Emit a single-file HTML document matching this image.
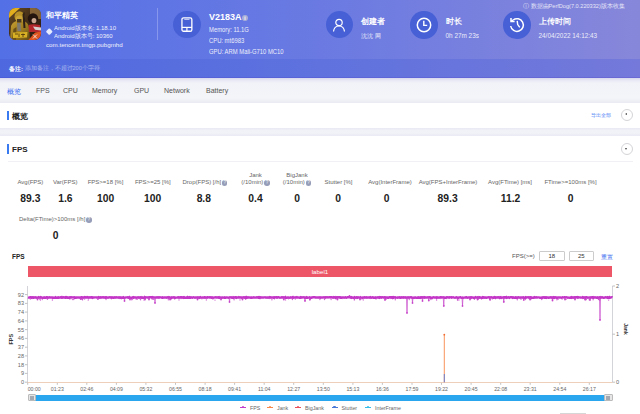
<!DOCTYPE html>
<html><head><meta charset="utf-8">
<style>
*{margin:0;padding:0;box-sizing:border-box}
html,body{width:640px;height:414px;overflow:hidden;background:#f2f3f8;font-family:"Liberation Sans",sans-serif;color:#333}
.a{position:absolute;white-space:nowrap}
.hs{transform:scaleX(.85);transform-origin:0 0}
#hdr{position:absolute;left:0;top:0;width:640px;height:59px;background:linear-gradient(90deg,#5470e6 0%,#6a7ae2 50%,#8787da 100%)}
#band{position:absolute;left:0;top:58.7px;width:640px;height:19.6px;box-shadow:inset 0 -1px 0 rgba(70,40,190,.18);background:linear-gradient(90deg,#4e69e0 0%,#5f72de 50%,#7479da 100%)}
.w{color:#fff}
.circ{position:absolute;width:27.4px;height:27.4px;border-radius:50%;background:#4760d6}
#tabs{position:absolute;left:0;top:78.3px;width:640px;height:24.5px;background:linear-gradient(#d8d8ee 0,#e8e9f5 2.5px,#f2f3f8 5px,#f4f5f9 20px,#ebecf3 24.5px)}
.tab{position:absolute;top:87.2px;font-size:7px;color:#555}
.card{position:absolute;left:0;width:640px;background:#fff}
.bar{position:absolute;width:2px;background:#3a7af0}
.ttl{position:absolute;font-size:8.5px;font-weight:bold;color:#222}
.lbl{position:absolute;font-size:6px;color:#666;text-align:center;line-height:7px}
.val{position:absolute;font-size:10.3px;font-weight:bold;color:#222;text-align:center}
.yl{position:absolute;font-size:5.5px;color:#555;text-align:right;width:14px}
.xl{position:absolute;font-size:5.5px;color:#555;text-align:center;width:20px;top:386px}
.q{display:inline-block;width:5.5px;height:5.5px;border-radius:50%;background:#959db8;color:#fff;font-size:4.5px;line-height:5.5px;text-align:center;margin-left:0.8px;vertical-align:0px}
.inp{border:0.7px solid #ccc;border-radius:1px;font-size:6px;color:#333;text-align:center;line-height:9px}
.lg{font-size:5.3px;color:#666}
.lg i{display:inline-block;width:6px;height:1.2px;margin-right:4px;vertical-align:1.6px;position:relative}
.lg i:after{content:"";position:absolute;left:1.8px;top:-0.9px;width:2.4px;height:2.4px;border-radius:50%;background:inherit}
</style></head><body>
<div id="hdr"></div>
<div id="band"></div>
<div id="tabs"></div>
<!-- app icon -->
<svg class="a" style="left:9.4px;top:8.4px" width="32" height="32" viewBox="0 0 32 32">
<defs><clipPath id="ic"><rect x="0" y="0" width="32" height="32" rx="6.5"/></clipPath>
<linearGradient id="bg1" x1="0" y1="0" x2="1" y2="1"><stop offset="0" stop-color="#6a4c22"/><stop offset=".5" stop-color="#3e2a16"/><stop offset="1" stop-color="#24160e"/></linearGradient>
<linearGradient id="sol" x1="0" y1="0" x2="1" y2="1"><stop offset="0" stop-color="#c9a030"/><stop offset=".6" stop-color="#94741e"/><stop offset="1" stop-color="#5e4614"/></linearGradient></defs>
<g clip-path="url(#ic)">
<rect width="32" height="32" fill="url(#bg1)"/>
<rect x="21" y="0" width="11" height="11" fill="#9a7440" opacity=".75"/>
<path d="M1 32 L2 18 Q4 13 9 13 L14 13 Q19 14 20 19 L21 32 Z" fill="url(#sol)"/>
<path d="M3 32 L4.5 21 L7.5 19 L7 32Z" fill="#6a5018"/>
<ellipse cx="10.5" cy="8.5" rx="5" ry="5.3" fill="#b89228"/>
<path d="M6.5 9.5 Q10.5 5.5 14.5 9.5 L13.5 13.5 L7.5 13.5Z" fill="#caa436"/>
<rect x="8" y="11" width="4.5" height="3.5" fill="#4a3820"/>
<path d="M8 15 L11.5 15 L12 23 L8.5 23Z" fill="#7e7a72"/>
<path d="M0 0 L11 0 L0 10Z" fill="#e2ae1e"/>
<path d="M13.5 6 L15.5 4 L16.5 20 L14.5 20Z" fill="#2e2016"/>
<ellipse cx="24" cy="10.5" rx="5.2" ry="5.2" fill="#24160f"/>
<ellipse cx="25" cy="12.6" rx="2.4" ry="2.7" fill="#c8a690"/>
<path d="M19.5 17 Q24 15.5 31 17 L32 24 L20 24Z" fill="#b0262a"/>
<path d="M24 18.5 L32 19.5 L32 22.5 L26 21.8Z" fill="#d6d0ce"/>
<path d="M4 24.5 L18.5 24 L18 29.5 L4 30Z" fill="#d8b024"/>
<path d="M6 26 H9 M10 25.5 V29 M12 26.5 H16 M14 25.5 V29" stroke="#4a300c" stroke-width=".8"/>
<path d="M19.4 32 L32 32 L32 23.5 L26 24.5Z" fill="#e05420"/>
<path d="M24 26.5 L28 30.5 M28 26.5 L24 30.5" stroke="#f4e8e0" stroke-width=".9"/>
</g></svg>
<div class="a w" style="left:46px;top:10px;font-size:8px;font-weight:bold">和平精英</div>
<div class="a" style="left:47.2px;top:28.7px;width:4.6px;height:4.6px;background:#e6ebff;transform:rotate(45deg);border-radius:1px"></div>
<div class="a w" style="left:54px;top:23.5px;font-size:6px;opacity:.9">Android版本名: 1.18.10</div>
<div class="a w" style="left:54px;top:31.5px;font-size:6px;opacity:.9">Android版本号: 10360</div>
<div class="a w" style="left:46px;top:41px;font-size:6.2px;opacity:.9">com.tencent.tmgp.pubgmhd</div>
<div class="a" style="left:157px;top:8px;width:1px;height:32px;background:rgba(255,255,255,.25)"></div>

<!-- device -->
<div class="circ" style="left:173.2px;top:11px"></div>
<svg class="a" style="left:180px;top:17px" width="15" height="17" viewBox="0 0 15 17"><rect x="1.95" y="0.85" width="9.9" height="13.4" rx="1.6" fill="none" stroke="#fff" stroke-width="1.3"/><line x1="4.3" y1="2.4" x2="9.5" y2="2.4" stroke="#fff" stroke-width="1" opacity=".7"/><line x1="1.95" y1="10.4" x2="11.85" y2="10.4" stroke="#fff" stroke-width="1.2"/><line x1="6.9" y1="10.4" x2="6.9" y2="14.2" stroke="#fff" stroke-width="1.2"/></svg>
<div class="a w" style="left:209px;top:11.5px;font-size:9px;font-weight:bold">V2183A</div>
<div class="a" style="left:242px;top:14.5px;width:6px;height:6px;border-radius:50%;background:#aab0d8;color:#fff;font-size:5px;line-height:6px;text-align:center;font-weight:bold">i</div>
<div class="a w hs" style="left:209px;top:26.3px;font-size:6.9px;opacity:.88">Memory: 11.1G</div>
<div class="a w hs" style="left:209px;top:37.1px;font-size:6.9px;opacity:.88">CPU: mt6983</div>
<div class="a w hs" style="left:209px;top:47.9px;font-size:6.9px;opacity:.88">GPU: ARM Mali-G710 MC10</div>

<!-- creator -->
<div class="circ" style="left:325.5px;top:11px"></div>
<svg class="a" style="left:331px;top:17px" width="16" height="16" viewBox="0 0 16 16"><circle cx="8" cy="5.5" r="3.2" fill="none" stroke="#fff" stroke-width="1.2"/><path d="M2.5 14.5 C3 10.5 5.5 9 8 9 C10.5 9 13 10.5 13.5 14.5" fill="none" stroke="#fff" stroke-width="1.2"/></svg>
<div class="a w" style="left:361px;top:16.2px;font-size:7.8px;font-weight:bold">创建者</div>
<div class="a w" style="left:361px;top:32px;font-size:6.4px;opacity:.85">沈沈 网</div>

<!-- duration -->
<div class="circ" style="left:410.2px;top:11.2px"></div>
<svg class="a" style="left:415.7px;top:16.7px" width="16" height="16" viewBox="0 0 16 16"><circle cx="8" cy="8" r="6.7" fill="none" stroke="#fff" stroke-width="1.5"/><path d="M7.8 3.8 V8.4 H11.2" fill="none" stroke="#fff" stroke-width="1.4"/></svg>
<div class="a w" style="left:445.5px;top:16.5px;font-size:7.6px;font-weight:bold">时长</div>
<div class="a w" style="left:445.5px;top:32px;font-size:6.4px;opacity:.85">0h 27m 23s</div>

<!-- upload -->
<div class="circ" style="left:503.3px;top:11.3px"></div>
<svg class="a" style="left:508.7px;top:17px" width="16" height="16" viewBox="0 0 16 16"><path d="M1.7 9 A6.35 6.35 0 1 0 4.1 3" fill="none" stroke="#fff" stroke-width="1.5"/><path d="M4.1 3 L2 4.4" fill="none" stroke="#fff" stroke-width="1.4"/><path d="M2 0.9 V4.4 H5.6" fill="none" stroke="#fff" stroke-width="1.5"/><path d="M8.2 3.9 L8.7 7.6 L10.8 10.4" fill="none" stroke="#fff" stroke-width="1.4"/></svg>
<div class="a w" style="left:538.5px;top:16.5px;font-size:7.6px;font-weight:bold">上传时间</div>
<div class="a w" style="left:538.5px;top:32px;font-size:6.4px;opacity:.85">24/04/2022 14:12:43</div>

<div class="a w" style="left:523px;top:3px;font-size:5.6px;opacity:.8">ⓘ 数据由PerfDog(7.0.220332)版本收集</div>

<!-- remarks -->
<div class="a w" style="left:9px;top:65.3px;font-size:5.8px;font-weight:bold">备注:</div>
<div class="a" style="left:24.5px;top:65.4px;font-size:5.6px;color:rgba(255,255,255,.5)">添加备注，不超过200个字符</div>

<!-- tabs -->
<div class="tab" style="left:7px;color:#3a6cf0">概览</div>
<div class="tab" style="left:36px">FPS</div>
<div class="tab" style="left:63px">CPU</div>
<div class="tab" style="left:92px">Memory</div>
<div class="tab" style="left:134px">GPU</div>
<div class="tab" style="left:164px">Network</div>
<div class="tab" style="left:206px">Battery</div>

<!-- overview card -->
<div class="card" style="top:102.5px;height:25.5px"></div>
<div class="bar" style="left:7px;top:110.5px;height:9px"></div>
<div class="ttl" style="left:12px;top:111px;font-size:7.8px">概览</div>
<div class="a" style="left:590.5px;top:112.2px;font-size:5.45px;color:#4a80f5">导出全部</div>
<div class="a" style="left:621px;top:109px;width:12px;height:12px;border-radius:50%;border:0.8px solid #d4d4d8"></div>
<div class="a" style="left:625.3px;top:113.2px;width:0;height:0;border-top:1.8px solid transparent;border-bottom:1.8px solid transparent;border-right:2.7px solid #444"></div>

<div class="a" style="left:0;top:128px;width:640px;height:8px;background:linear-gradient(#e8e9f3 0,#f1f2f8 2.5px,#f2f3f8 5px,#e9eaf3 8px)"></div>
<!-- FPS card -->
<div class="card" style="top:136px;height:278px"></div>
<div class="bar" style="left:7px;top:144px;height:9.5px"></div>
<div class="ttl" style="left:12px;top:144.5px;font-size:8px">FPS</div>
<div class="a" style="left:621px;top:143px;width:12px;height:12px;border-radius:50%;border:0.8px solid #d4d4d8"></div>
<div class="a" style="left:625px;top:148px;width:0;height:0;border-left:1.8px solid transparent;border-right:1.8px solid transparent;border-top:2.7px solid #444"></div>
<div class="a" style="left:8px;top:161.2px;width:625px;height:1px;background:#f0f0f5"></div>


<!-- stats -->
<div class="lbl" style="left:-19.6px;top:179.2px;width:100px">Avg(FPS)</div>
<div class="lbl" style="left:15.2px;top:179.2px;width:100px">Var(FPS)</div>
<div class="lbl" style="left:55.5px;top:179.2px;width:100px">FPS&gt;=18 [%]</div>
<div class="lbl" style="left:102.8px;top:179.2px;width:100px">FPS&gt;=25 [%]</div>
<div class="lbl" style="left:155.0px;top:179.2px;width:100px">Drop(FPS) [/h]<span class="q">?</span></div>
<div class="lbl" style="left:205.5px;top:172px;width:100px">Jank<br>(/10min)<span class="q">?</span></div>
<div class="lbl" style="left:247.0px;top:172px;width:100px">BigJank<br>(/10min)<span class="q">?</span></div>
<div class="lbl" style="left:288.5px;top:179.2px;width:100px">Stutter [%]</div>
<div class="lbl" style="left:340.0px;top:179.2px;width:100px">Avg(InterFrame)</div>
<div class="lbl" style="left:398.0px;top:179.2px;width:100px">Avg(FPS+InterFrame)</div>
<div class="lbl" style="left:460.0px;top:179.2px;width:100px">Avg(FTime) [ms]</div>
<div class="lbl" style="left:520.5px;top:179.2px;width:100px">FTime&gt;=100ms [%]</div>
<div class="val" style="left:0.4px;top:192.5px;width:60px">89.3</div>
<div class="val" style="left:35.4px;top:192.5px;width:60px">1.6</div>
<div class="val" style="left:75.7px;top:192.5px;width:60px">100</div>
<div class="val" style="left:122.6px;top:192.5px;width:60px">100</div>
<div class="val" style="left:173.8px;top:192.5px;width:60px">8.8</div>
<div class="val" style="left:225.5px;top:192.5px;width:60px">0.4</div>
<div class="val" style="left:267.0px;top:192.5px;width:60px">0</div>
<div class="val" style="left:308.0px;top:192.5px;width:60px">0</div>
<div class="val" style="left:356.5px;top:192.5px;width:60px">0</div>
<div class="val" style="left:417.6px;top:192.5px;width:60px">89.3</div>
<div class="val" style="left:480.5px;top:192.5px;width:60px">11.2</div>
<div class="val" style="left:540.5px;top:192.5px;width:60px">0</div>
<div class="lbl" style="left:19px;top:216px;text-align:left">Delta(FTime)&gt;100ms [/h]<span class="q">?</span></div>
<div class="val" style="left:25.7px;top:229.5px;width:60px">0</div>

<!-- chart header -->
<div class="a" style="left:12px;top:253px;font-size:6.5px;font-weight:bold;color:#222">FPS</div>
<div class="a" style="left:512px;top:252.5px;font-size:6px;color:#555">FPS(&gt;=)</div>
<div class="a inp" style="left:538.5px;top:251px;width:26.5px;height:10px">18</div>
<div class="a inp" style="left:568.5px;top:251px;width:25.5px;height:10px">25</div>
<div class="a" style="left:601px;top:252.5px;font-size:5.8px;color:#3a6cf0">重置</div>
<div class="a" style="left:27.8px;top:266.3px;width:584.7px;height:10.6px;background:#ec5666"></div>
<div class="a" style="left:300px;top:267.8px;width:40px;text-align:center;font-size:6.2px;color:#fff">label1</div>

<!-- scrollbar -->
<div class="a" style="left:30px;top:394.6px;width:580px;height:6px;background:#2aa6ee"></div>
<div class="a" style="left:27.6px;top:394.2px;width:8.5px;height:7.3px;background:#e6e6e6;border:0.7px solid #bbb;border-radius:1px"></div>
<div class="a" style="left:29.8px;top:396px;width:4.2px;height:3.6px;background:#a4a8b0"></div>
<div class="a" style="left:604px;top:394.2px;width:8.5px;height:7.3px;background:#e6e6e6;border:0.7px solid #bbb;border-radius:1px"></div>
<div class="a" style="left:606.2px;top:396px;width:4.2px;height:3.6px;background:#a4a8b0"></div>
<div class="a" style="left:560px;top:413px;width:26px;height:1px;background:#d6d6d6"></div>

<!-- legend -->
<div class="a lg" style="left:240px;top:404.5px"><i style="background:#c23fcb"></i>FPS</div>
<div class="a lg" style="left:267px;top:404.5px"><i style="background:#f7884a"></i>Jank</div>
<div class="a lg" style="left:295px;top:404.5px"><i style="background:#e8505a"></i>BigJank</div>
<div class="a lg" style="left:331.5px;top:404.5px"><i style="background:#4a7ad8"></i>Stutter</div>
<div class="a lg" style="left:365px;top:404.5px"><i style="background:#38bce8"></i>InterFrame</div>
<!--CHART--><svg class="a" style="left:0;top:0" width="640" height="414" viewBox="0 0 640 414" font-family="Liberation Sans, sans-serif">
<g font-size="5.6" fill="#666"><text x="24" y="384.2" text-anchor="end">0</text><line x1="25" y1="382.2" x2="28" y2="382.2" stroke="#999" stroke-width="0.6"/><text x="24" y="375.4" text-anchor="end">9</text><line x1="25" y1="373.4" x2="28" y2="373.4" stroke="#999" stroke-width="0.6"/><text x="24" y="366.7" text-anchor="end">18</text><line x1="25" y1="364.7" x2="28" y2="364.7" stroke="#999" stroke-width="0.6"/><text x="24" y="357.9" text-anchor="end">28</text><line x1="25" y1="355.9" x2="28" y2="355.9" stroke="#999" stroke-width="0.6"/><text x="24" y="349.2" text-anchor="end">37</text><line x1="25" y1="347.2" x2="28" y2="347.2" stroke="#999" stroke-width="0.6"/><text x="24" y="340.4" text-anchor="end">46</text><line x1="25" y1="338.4" x2="28" y2="338.4" stroke="#999" stroke-width="0.6"/><text x="24" y="331.6" text-anchor="end">55</text><line x1="25" y1="329.6" x2="28" y2="329.6" stroke="#999" stroke-width="0.6"/><text x="24" y="322.9" text-anchor="end">64</text><line x1="25" y1="320.9" x2="28" y2="320.9" stroke="#999" stroke-width="0.6"/><text x="24" y="314.1" text-anchor="end">74</text><line x1="25" y1="312.1" x2="28" y2="312.1" stroke="#999" stroke-width="0.6"/><text x="24" y="305.4" text-anchor="end">83</text><line x1="25" y1="303.4" x2="28" y2="303.4" stroke="#999" stroke-width="0.6"/><text x="24" y="296.6" text-anchor="end">92</text><line x1="25" y1="294.6" x2="28" y2="294.6" stroke="#999" stroke-width="0.6"/><text x="27.7" y="390.9" font-size="5.2" text-anchor="start">00:00</text><line x1="27.7" y1="382.5" x2="27.7" y2="384.8" stroke="#999" stroke-width="0.6"/><text x="57.3" y="390.9" font-size="5.2" text-anchor="middle">01:23</text><line x1="57.3" y1="382.5" x2="57.3" y2="384.8" stroke="#999" stroke-width="0.6"/><text x="86.8" y="390.9" font-size="5.2" text-anchor="middle">02:46</text><line x1="86.8" y1="382.5" x2="86.8" y2="384.8" stroke="#999" stroke-width="0.6"/><text x="116.4" y="390.9" font-size="5.2" text-anchor="middle">04:09</text><line x1="116.4" y1="382.5" x2="116.4" y2="384.8" stroke="#999" stroke-width="0.6"/><text x="145.9" y="390.9" font-size="5.2" text-anchor="middle">05:32</text><line x1="145.9" y1="382.5" x2="145.9" y2="384.8" stroke="#999" stroke-width="0.6"/><text x="175.5" y="390.9" font-size="5.2" text-anchor="middle">06:55</text><line x1="175.5" y1="382.5" x2="175.5" y2="384.8" stroke="#999" stroke-width="0.6"/><text x="205.1" y="390.9" font-size="5.2" text-anchor="middle">08:18</text><line x1="205.1" y1="382.5" x2="205.1" y2="384.8" stroke="#999" stroke-width="0.6"/><text x="234.6" y="390.9" font-size="5.2" text-anchor="middle">09:41</text><line x1="234.6" y1="382.5" x2="234.6" y2="384.8" stroke="#999" stroke-width="0.6"/><text x="264.2" y="390.9" font-size="5.2" text-anchor="middle">11:04</text><line x1="264.2" y1="382.5" x2="264.2" y2="384.8" stroke="#999" stroke-width="0.6"/><text x="293.7" y="390.9" font-size="5.2" text-anchor="middle">12:27</text><line x1="293.7" y1="382.5" x2="293.7" y2="384.8" stroke="#999" stroke-width="0.6"/><text x="323.3" y="390.9" font-size="5.2" text-anchor="middle">13:50</text><line x1="323.3" y1="382.5" x2="323.3" y2="384.8" stroke="#999" stroke-width="0.6"/><text x="352.9" y="390.9" font-size="5.2" text-anchor="middle">15:13</text><line x1="352.9" y1="382.5" x2="352.9" y2="384.8" stroke="#999" stroke-width="0.6"/><text x="382.4" y="390.9" font-size="5.2" text-anchor="middle">16:36</text><line x1="382.4" y1="382.5" x2="382.4" y2="384.8" stroke="#999" stroke-width="0.6"/><text x="412.0" y="390.9" font-size="5.2" text-anchor="middle">17:59</text><line x1="412.0" y1="382.5" x2="412.0" y2="384.8" stroke="#999" stroke-width="0.6"/><text x="441.5" y="390.9" font-size="5.2" text-anchor="middle">19:22</text><line x1="441.5" y1="382.5" x2="441.5" y2="384.8" stroke="#999" stroke-width="0.6"/><text x="471.1" y="390.9" font-size="5.2" text-anchor="middle">20:45</text><line x1="471.1" y1="382.5" x2="471.1" y2="384.8" stroke="#999" stroke-width="0.6"/><text x="500.7" y="390.9" font-size="5.2" text-anchor="middle">22:08</text><line x1="500.7" y1="382.5" x2="500.7" y2="384.8" stroke="#999" stroke-width="0.6"/><text x="530.2" y="390.9" font-size="5.2" text-anchor="middle">23:31</text><line x1="530.2" y1="382.5" x2="530.2" y2="384.8" stroke="#999" stroke-width="0.6"/><text x="559.8" y="390.9" font-size="5.2" text-anchor="middle">24:54</text><line x1="559.8" y1="382.5" x2="559.8" y2="384.8" stroke="#999" stroke-width="0.6"/><text x="589.3" y="390.9" font-size="5.2" text-anchor="middle">26:17</text><line x1="589.3" y1="382.5" x2="589.3" y2="384.8" stroke="#999" stroke-width="0.6"/>
<text x="616" y="288">2</text><text x="616" y="336">1</text><text x="616" y="384">0</text>
</g>
<line x1="27.5" y1="286" x2="27.5" y2="382.5" stroke="#c8c8d0" stroke-width="0.8"/>
<line x1="612.5" y1="286" x2="612.5" y2="382.5" stroke="#c8c8d0" stroke-width="0.8"/>
<line x1="612.5" y1="286" x2="615" y2="286" stroke="#999" stroke-width="0.6"/>
<line x1="612.5" y1="334.2" x2="615" y2="334.2" stroke="#999" stroke-width="0.6"/>
<line x1="612.5" y1="382.2" x2="615" y2="382.2" stroke="#999" stroke-width="0.6"/>
<line x1="27.5" y1="382.5" x2="612.5" y2="382.5" stroke="#ebc9b2" stroke-width="0.9"/>
<path d="M28.0 297.34 L28.5 297.53 L29.0 297.42 L29.5 297.56 L30.0 297.58 L30.5 297.24 L31.0 297.21 L31.5 297.70 L32.0 297.36 L32.5 297.34 L33.0 297.80 L33.5 297.48 L34.0 297.70 L34.5 297.49 L35.0 297.58 L35.5 297.29 L36.0 297.58 L36.5 297.72 L37.0 297.51 L37.5 297.64 L38.0 297.60 L38.5 297.24 L39.0 297.65 L39.5 297.55 L40.0 297.38 L40.5 297.22 L41.0 297.72 L41.5 297.48 L42.0 297.63 L42.5 297.73 L43.0 297.63 L43.5 297.75 L44.0 297.44 L44.5 297.68 L45.0 297.47 L45.5 297.76 L46.0 297.73 L46.5 297.26 L47.0 297.28 L47.5 297.33 L48.0 297.78 L48.5 297.46 L49.0 297.58 L49.5 297.38 L50.0 297.50 L50.5 297.43 L51.0 297.41 L51.5 297.55 L52.0 297.55 L52.5 297.74 L53.0 297.61 L53.5 297.76 L54.0 297.71 L54.5 297.79 L55.0 297.60 L55.5 297.30 L56.0 297.72 L56.5 297.78 L57.0 297.74 L57.5 297.54 L58.0 297.63 L58.5 297.33 L59.0 297.70 L59.5 297.54 L60.0 297.37 L60.5 297.24 L61.0 297.71 L61.5 297.79 L62.0 297.25 L62.5 297.68 L63.0 297.45 L63.5 297.29 L64.0 297.38 L64.5 297.66 L65.0 297.72 L65.5 297.23 L66.0 297.57 L66.5 297.23 L67.0 297.63 L67.5 297.40 L68.0 297.73 L68.5 297.79 L69.0 297.50 L69.5 297.80 L70.0 297.39 L70.5 297.25 L71.0 297.56 L71.5 297.22 L72.0 297.32 L72.5 297.44 L73.0 297.57 L73.5 297.29 L74.0 297.23 L74.5 297.72 L75.0 297.39 L75.5 297.78 L76.0 297.74 L76.5 297.43 L77.0 297.48 L77.5 297.51 L78.0 297.59 L78.5 297.56 L79.0 297.54 L79.5 297.57 L80.0 297.76 L80.5 297.50 L81.0 297.46 L81.5 297.63 L82.0 297.34 L82.5 297.38 L83.0 297.79 L83.5 297.51 L84.0 297.53 L84.5 297.21 L85.0 297.45 L85.5 297.55 L86.0 297.21 L86.5 297.57 L87.0 297.58 L87.5 297.24 L88.0 297.58 L88.5 297.48 L89.0 297.61 L89.5 297.41 L90.0 297.62 L90.5 297.64 L91.0 297.21 L91.5 297.24 L92.0 297.61 L92.5 297.78 L93.0 297.35 L93.5 297.47 L94.0 297.56 L94.5 297.39 L95.0 297.42 L95.5 297.39 L96.0 297.42 L96.5 297.56 L97.0 297.38 L97.5 297.43 L98.0 297.66 L98.5 297.22 L99.0 297.54 L99.5 297.64 L100.0 297.39 L100.5 297.33 L101.0 297.68 L101.5 297.34 L102.0 297.31 L102.5 297.46 L103.0 297.62 L103.5 297.26 L104.0 297.39 L104.5 297.40 L105.0 297.70 L105.5 297.46 L106.0 297.71 L106.5 297.30 L107.0 297.40 L107.5 297.59 L108.0 297.73 L108.5 297.47 L109.0 297.34 L109.5 297.27 L110.0 297.52 L110.5 297.31 L111.0 297.68 L111.5 297.70 L112.0 297.31 L112.5 297.37 L113.0 297.68 L113.5 297.59 L114.0 297.68 L114.5 297.41 L115.0 297.28 L115.5 297.38 L116.0 297.68 L116.5 297.36 L117.0 297.41 L117.5 297.45 L118.0 297.45 L118.5 297.45 L119.0 297.75 L119.5 297.29 L120.0 297.20 L120.5 297.77 L121.0 297.73 L121.5 297.79 L122.0 297.46 L122.5 297.77 L123.0 297.76 L123.5 297.33 L124.0 297.65 L124.5 297.70 L125.0 297.60 L125.5 297.51 L126.0 297.37 L126.5 297.40 L127.0 297.34 L127.5 297.24 L128.0 297.55 L128.5 297.37 L129.0 297.69 L129.5 297.23 L130.0 297.74 L130.5 297.62 L131.0 297.75 L131.5 297.74 L132.0 297.74 L132.5 297.55 L133.0 297.21 L133.5 297.65 L134.0 297.30 L134.5 297.38 L135.0 297.60 L135.5 297.51 L136.0 297.45 L136.5 297.76 L137.0 297.57 L137.5 297.40 L138.0 297.35 L138.5 297.72 L139.0 297.49 L139.5 297.67 L140.0 297.41 L140.5 297.32 L141.0 297.52 L141.5 297.69 L142.0 297.30 L142.5 297.68 L143.0 297.75 L143.5 297.68 L144.0 297.69 L144.5 297.20 L145.0 297.58 L145.5 297.72 L146.0 297.23 L146.5 297.36 L147.0 297.36 L147.5 297.52 L148.0 297.45 L148.5 297.48 L149.0 297.67 L149.5 297.20 L150.0 297.23 L150.5 297.28 L151.0 297.27 L151.5 297.24 L152.0 297.78 L152.5 297.71 L153.0 297.25 L153.5 297.50 L154.0 297.39 L154.5 297.39 L155.0 297.41 L155.5 297.59 L156.0 297.55 L156.5 297.42 L157.0 297.31 L157.5 297.40 L158.0 297.27 L158.5 297.53 L159.0 297.63 L159.5 297.43 L160.0 297.25 L160.5 297.31 L161.0 297.42 L161.5 297.56 L162.0 297.67 L162.5 297.43 L163.0 297.68 L163.5 297.57 L164.0 297.46 L164.5 297.42 L165.0 297.50 L165.5 297.62 L166.0 297.45 L166.5 297.62 L167.0 297.48 L167.5 297.35 L168.0 297.52 L168.5 297.62 L169.0 297.24 L169.5 297.45 L170.0 297.46 L170.5 297.73 L171.0 297.76 L171.5 297.42 L172.0 297.74 L172.5 297.67 L173.0 297.36 L173.5 297.48 L174.0 297.27 L174.5 297.69 L175.0 297.60 L175.5 297.73 L176.0 297.68 L176.5 297.60 L177.0 297.64 L177.5 297.54 L178.0 297.26 L178.5 297.55 L179.0 297.20 L179.5 297.29 L180.0 297.66 L180.5 297.23 L181.0 297.26 L181.5 297.26 L182.0 297.73 L182.5 297.31 L183.0 297.21 L183.5 297.70 L184.0 297.27 L184.5 297.71 L185.0 297.60 L185.5 297.70 L186.0 297.77 L186.5 297.55 L187.0 297.68 L187.5 297.22 L188.0 297.66 L188.5 297.51 L189.0 297.63 L189.5 297.26 L190.0 297.65 L190.5 297.76 L191.0 297.24 L191.5 297.39 L192.0 297.54 L192.5 297.70 L193.0 297.35 L193.5 297.31 L194.0 297.35 L194.5 297.57 L195.0 297.65 L195.5 297.44 L196.0 297.42 L196.5 297.44 L197.0 297.41 L197.5 297.45 L198.0 297.25 L198.5 297.50 L199.0 297.78 L199.5 297.45 L200.0 297.65 L200.5 297.30 L201.0 297.61 L201.5 297.65 L202.0 297.60 L202.5 297.51 L203.0 297.49 L203.5 297.59 L204.0 297.74 L204.5 297.29 L205.0 297.26 L205.5 297.65 L206.0 297.75 L206.5 297.51 L207.0 297.47 L207.5 297.63 L208.0 297.31 L208.5 297.36 L209.0 297.32 L209.5 297.55 L210.0 297.39 L210.5 297.34 L211.0 297.61 L211.5 297.77 L212.0 297.38 L212.5 297.62 L213.0 297.45 L213.5 297.71 L214.0 297.55 L214.5 297.36 L215.0 297.33 L215.5 297.21 L216.0 297.49 L216.5 297.43 L217.0 297.30 L217.5 297.42 L218.0 297.39 L218.5 297.66 L219.0 297.29 L219.5 297.79 L220.0 297.49 L220.5 297.56 L221.0 297.48 L221.5 297.70 L222.0 297.69 L222.5 297.53 L223.0 297.49 L223.5 297.63 L224.0 297.71 L224.5 297.44 L225.0 297.64 L225.5 297.78 L226.0 297.48 L226.5 297.34 L227.0 297.34 L227.5 297.63 L228.0 297.61 L228.5 297.78 L229.0 297.71 L229.5 297.35 L230.0 297.31 L230.5 297.36 L231.0 297.31 L231.5 297.62 L232.0 297.72 L232.5 297.74 L233.0 297.35 L233.5 297.72 L234.0 297.39 L234.5 297.45 L235.0 297.64 L235.5 297.25 L236.0 297.26 L236.5 297.70 L237.0 297.38 L237.5 297.41 L238.0 297.55 L238.5 297.61 L239.0 297.20 L239.5 297.40 L240.0 297.46 L240.5 297.49 L241.0 297.33 L241.5 297.55 L242.0 297.77 L242.5 297.43 L243.0 297.53 L243.5 297.27 L244.0 297.36 L244.5 297.60 L245.0 297.27 L245.5 297.73 L246.0 297.75 L246.5 297.26 L247.0 297.76 L247.5 297.42 L248.0 297.66 L248.5 297.65 L249.0 297.38 L249.5 297.61 L250.0 297.59 L250.5 297.68 L251.0 297.36 L251.5 297.65 L252.0 297.78 L252.5 297.60 L253.0 297.52 L253.5 297.27 L254.0 297.50 L254.5 297.41 L255.0 297.63 L255.5 297.61 L256.0 297.54 L256.5 297.31 L257.0 297.59 L257.5 297.58 L258.0 297.31 L258.5 297.73 L259.0 297.59 L259.5 297.27 L260.0 297.76 L260.5 297.28 L261.0 297.40 L261.5 297.63 L262.0 297.56 L262.5 297.53 L263.0 297.59 L263.5 297.47 L264.0 297.39 L264.5 297.31 L265.0 297.24 L265.5 297.63 L266.0 297.65 L266.5 297.53 L267.0 297.64 L267.5 297.42 L268.0 297.36 L268.5 297.43 L269.0 297.72 L269.5 297.23 L270.0 297.50 L270.5 297.35 L271.0 297.66 L271.5 297.41 L272.0 297.40 L272.5 297.44 L273.0 297.52 L273.5 297.66 L274.0 297.41 L274.5 297.71 L275.0 297.27 L275.5 297.36 L276.0 297.26 L276.5 297.27 L277.0 297.67 L277.5 297.64 L278.0 297.31 L278.5 297.31 L279.0 297.45 L279.5 297.65 L280.0 297.69 L280.5 297.65 L281.0 297.56 L281.5 297.29 L282.0 297.44 L282.5 297.32 L283.0 297.52 L283.5 297.54 L284.0 297.32 L284.5 297.35 L285.0 297.67 L285.5 297.22 L286.0 297.68 L286.5 297.73 L287.0 297.77 L287.5 297.43 L288.0 297.53 L288.5 297.55 L289.0 297.58 L289.5 297.79 L290.0 297.61 L290.5 297.38 L291.0 297.72 L291.5 297.49 L292.0 297.56 L292.5 297.64 L293.0 297.20 L293.5 297.66 L294.0 297.60 L294.5 297.50 L295.0 297.51 L295.5 297.48 L296.0 297.32 L296.5 297.52 L297.0 297.22 L297.5 297.50 L298.0 297.59 L298.5 297.47 L299.0 297.54 L299.5 297.78 L300.0 297.74 L300.5 297.28 L301.0 297.68 L301.5 297.57 L302.0 297.23 L302.5 297.42 L303.0 297.34 L303.5 297.25 L304.0 297.52 L304.5 297.76 L305.0 297.39 L305.5 297.72 L306.0 297.62 L306.5 297.28 L307.0 297.71 L307.5 297.56 L308.0 297.76 L308.5 297.63 L309.0 297.64 L309.5 297.41 L310.0 297.68 L310.5 297.76 L311.0 297.72 L311.5 297.46 L312.0 297.65 L312.5 297.49 L313.0 297.27 L313.5 297.23 L314.0 297.25 L314.5 297.32 L315.0 297.30 L315.5 297.50 L316.0 297.62 L316.5 297.52 L317.0 297.45 L317.5 297.59 L318.0 297.38 L318.5 297.48 L319.0 297.65 L319.5 297.44 L320.0 297.31 L320.5 297.74 L321.0 297.63 L321.5 297.42 L322.0 297.42 L322.5 297.52 L323.0 297.56 L323.5 297.33 L324.0 297.20 L324.5 297.33 L325.0 297.67 L325.5 297.29 L326.0 297.48 L326.5 297.32 L327.0 297.33 L327.5 297.30 L328.0 297.44 L328.5 297.30 L329.0 297.22 L329.5 297.27 L330.0 297.30 L330.5 297.49 L331.0 297.24 L331.5 297.21 L332.0 297.47 L332.5 297.44 L333.0 297.62 L333.5 297.23 L334.0 297.44 L334.5 297.44 L335.0 297.22 L335.5 297.78 L336.0 297.33 L336.5 297.26 L337.0 297.48 L337.5 297.30 L338.0 297.57 L338.5 297.41 L339.0 297.27 L339.5 297.23 L340.0 297.64 L340.5 297.37 L341.0 297.67 L341.5 297.48 L342.0 297.76 L342.5 297.38 L343.0 297.35 L343.5 297.36 L344.0 297.69 L344.5 297.58 L345.0 297.41 L345.5 297.26 L346.0 297.61 L346.5 297.78 L347.0 297.56 L347.5 297.20 L348.0 297.22 L348.5 297.25 L349.0 297.30 L349.5 297.22 L350.0 297.23 L350.5 297.59 L351.0 297.74 L351.5 297.32 L352.0 297.78 L352.5 297.49 L353.0 297.68 L353.5 297.75 L354.0 297.76 L354.5 297.22 L355.0 297.38 L355.5 297.56 L356.0 297.77 L356.5 297.25 L357.0 297.38 L357.5 297.71 L358.0 297.27 L358.5 297.43 L359.0 297.40 L359.5 297.61 L360.0 297.76 L360.5 297.30 L361.0 297.64 L361.5 297.64 L362.0 297.70 L362.5 297.53 L363.0 297.75 L363.5 297.42 L364.0 297.45 L364.5 297.34 L365.0 297.67 L365.5 297.49 L366.0 297.36 L366.5 297.30 L367.0 297.63 L367.5 297.56 L368.0 297.63 L368.5 297.43 L369.0 297.49 L369.5 297.29 L370.0 297.63 L370.5 297.21 L371.0 297.48 L371.5 297.66 L372.0 297.61 L372.5 297.26 L373.0 297.34 L373.5 297.71 L374.0 297.59 L374.5 297.73 L375.0 297.72 L375.5 297.47 L376.0 297.74 L376.5 297.64 L377.0 297.40 L377.5 297.42 L378.0 297.24 L378.5 297.44 L379.0 297.77 L379.5 297.26 L380.0 297.54 L380.5 297.27 L381.0 297.25 L381.5 297.59 L382.0 297.34 L382.5 297.23 L383.0 297.29 L383.5 297.59 L384.0 297.55 L384.5 297.21 L385.0 297.34 L385.5 297.78 L386.0 297.33 L386.5 297.54 L387.0 297.45 L387.5 297.67 L388.0 297.56 L388.5 297.67 L389.0 297.52 L389.5 297.31 L390.0 297.31 L390.5 297.25 L391.0 297.70 L391.5 297.27 L392.0 297.21 L392.5 297.78 L393.0 297.32 L393.5 297.74 L394.0 297.25 L394.5 297.48 L395.0 297.33 L395.5 297.70 L396.0 297.57 L396.5 297.59 L397.0 297.66 L397.5 297.72 L398.0 297.41 L398.5 297.56 L399.0 297.47 L399.5 297.27 L400.0 297.70 L400.5 297.56 L401.0 297.69 L401.5 297.32 L402.0 297.52 L402.5 297.48 L403.0 297.64 L403.5 297.25 L404.0 297.41 L404.5 297.49 L405.0 297.24 L405.5 297.53 L406.0 297.64 L406.5 297.45 L407.0 297.59 L407.5 297.56 L408.0 297.33 L408.5 297.41 L409.0 297.80 L409.5 297.40 L410.0 297.46 L410.5 297.25 L411.0 297.33 L411.5 297.30 L412.0 297.76 L412.5 297.64 L413.0 297.72 L413.5 297.79 L414.0 297.57 L414.5 297.76 L415.0 297.52 L415.5 297.45 L416.0 297.77 L416.5 297.74 L417.0 297.77 L417.5 297.49 L418.0 297.66 L418.5 297.44 L419.0 297.80 L419.5 297.75 L420.0 297.38 L420.5 297.76 L421.0 297.31 L421.5 297.26 L422.0 297.63 L422.5 297.38 L423.0 297.51 L423.5 297.58 L424.0 297.22 L424.5 297.65 L425.0 297.37 L425.5 297.46 L426.0 297.41 L426.5 297.65 L427.0 297.65 L427.5 297.37 L428.0 297.26 L428.5 297.38 L429.0 297.45 L429.5 297.25 L430.0 297.29 L430.5 297.66 L431.0 297.62 L431.5 297.79 L432.0 297.79 L432.5 297.73 L433.0 297.42 L433.5 297.30 L434.0 297.39 L434.5 297.48 L435.0 297.52 L435.5 297.53 L436.0 297.42 L436.5 297.71 L437.0 297.37 L437.5 297.48 L438.0 297.73 L438.5 297.68 L439.0 297.38 L439.5 297.35 L440.0 297.68 L440.5 297.21 L441.0 297.28 L441.5 297.52 L442.0 297.52 L442.5 297.30 L443.0 297.23 L443.5 297.32 L444.0 297.66 L444.5 297.48 L445.0 297.79 L445.5 297.67 L446.0 297.79 L446.5 297.22 L447.0 297.31 L447.5 297.21 L448.0 297.46 L448.5 297.40 L449.0 297.23 L449.5 297.53 L450.0 297.26 L450.5 297.39 L451.0 297.35 L451.5 297.68 L452.0 297.45 L452.5 297.36 L453.0 297.23 L453.5 297.46 L454.0 297.58 L454.5 297.61 L455.0 297.75 L455.5 297.69 L456.0 297.35 L456.5 297.28 L457.0 297.65 L457.5 297.67 L458.0 297.51 L458.5 297.70 L459.0 297.53 L459.5 297.37 L460.0 297.30 L460.5 297.21 L461.0 297.59 L461.5 297.74 L462.0 297.74 L462.5 297.48 L463.0 297.60 L463.5 297.76 L464.0 297.69 L464.5 297.56 L465.0 297.45 L465.5 297.51 L466.0 297.30 L466.5 297.31 L467.0 297.61 L467.5 297.80 L468.0 297.53 L468.5 297.44 L469.0 297.41 L469.5 297.47 L470.0 297.68 L470.5 297.47 L471.0 297.78 L471.5 297.29 L472.0 297.39 L472.5 297.51 L473.0 297.45 L473.5 297.71 L474.0 297.70 L474.5 297.76 L475.0 297.57 L475.5 297.22 L476.0 297.54 L476.5 297.53 L477.0 297.49 L477.5 297.37 L478.0 297.63 L478.5 297.75 L479.0 297.26 L479.5 297.60 L480.0 297.42 L480.5 297.51 L481.0 297.74 L481.5 297.78 L482.0 297.59 L482.5 297.32 L483.0 297.75 L483.5 297.31 L484.0 297.43 L484.5 297.70 L485.0 297.39 L485.5 297.36 L486.0 297.77 L486.5 297.77 L487.0 297.39 L487.5 297.44 L488.0 297.37 L488.5 297.28 L489.0 297.35 L489.5 297.79 L490.0 297.25 L490.5 297.34 L491.0 297.32 L491.5 297.25 L492.0 297.52 L492.5 297.65 L493.0 297.70 L493.5 297.58 L494.0 297.69 L494.5 297.20 L495.0 297.37 L495.5 297.78 L496.0 297.24 L496.5 297.36 L497.0 297.49 L497.5 297.36 L498.0 297.53 L498.5 297.23 L499.0 297.34 L499.5 297.77 L500.0 297.29 L500.5 297.74 L501.0 297.31 L501.5 297.80 L502.0 297.60 L502.5 297.59 L503.0 297.29 L503.5 297.23 L504.0 297.66 L504.5 297.31 L505.0 297.31 L505.5 297.69 L506.0 297.72 L506.5 297.23 L507.0 297.78 L507.5 297.52 L508.0 297.43 L508.5 297.26 L509.0 297.43 L509.5 297.79 L510.0 297.37 L510.5 297.28 L511.0 297.29 L511.5 297.28 L512.0 297.41 L512.5 297.75 L513.0 297.25 L513.5 297.32 L514.0 297.76 L514.5 297.80 L515.0 297.79 L515.5 297.35 L516.0 297.41 L516.5 297.77 L517.0 297.49 L517.5 297.62 L518.0 297.39 L518.5 297.21 L519.0 297.41 L519.5 297.65 L520.0 297.67 L520.5 297.54 L521.0 297.48 L521.5 297.52 L522.0 297.47 L522.5 297.52 L523.0 297.70 L523.5 297.32 L524.0 297.56 L524.5 297.76 L525.0 297.71 L525.5 297.31 L526.0 297.78 L526.5 297.70 L527.0 297.30 L527.5 297.36 L528.0 297.32 L528.5 297.23 L529.0 297.79 L529.5 297.45 L530.0 297.72 L530.5 297.27 L531.0 297.21 L531.5 297.72 L532.0 297.68 L532.5 297.79 L533.0 297.61 L533.5 297.52 L534.0 297.66 L534.5 297.26 L535.0 297.52 L535.5 297.46 L536.0 297.29 L536.5 297.56 L537.0 297.39 L537.5 297.50 L538.0 297.42 L538.5 297.39 L539.0 297.42 L539.5 297.56 L540.0 297.79 L540.5 297.76 L541.0 297.72 L541.5 297.70 L542.0 297.37 L542.5 297.79 L543.0 297.36 L543.5 297.27 L544.0 297.50 L544.5 297.64 L545.0 297.40 L545.5 297.59 L546.0 297.37 L546.5 297.78 L547.0 297.47 L547.5 297.49 L548.0 297.52 L548.5 297.72 L549.0 297.79 L549.5 297.52 L550.0 297.46 L550.5 297.57 L551.0 297.24 L551.5 297.46 L552.0 297.71 L552.5 297.67 L553.0 297.24 L553.5 297.71 L554.0 297.43 L554.5 297.79 L555.0 297.42 L555.5 297.33 L556.0 297.53 L556.5 297.73 L557.0 297.46 L557.5 297.72 L558.0 297.63 L558.5 297.42 L559.0 297.38 L559.5 297.50 L560.0 297.44 L560.5 297.42 L561.0 297.59 L561.5 297.73 L562.0 297.55 L562.5 297.29 L563.0 297.33 L563.5 297.42 L564.0 297.57 L564.5 297.28 L565.0 297.25 L565.5 297.39 L566.0 297.37 L566.5 297.22 L567.0 297.52 L567.5 297.75 L568.0 297.52 L568.5 297.64 L569.0 297.70 L569.5 297.70 L570.0 297.75 L570.5 297.46 L571.0 297.61 L571.5 297.27 L572.0 297.73 L572.5 297.43 L573.0 297.49 L573.5 297.73 L574.0 297.37 L574.5 297.31 L575.0 297.69 L575.5 297.56 L576.0 297.25 L576.5 297.22 L577.0 297.41 L577.5 297.20 L578.0 297.70 L578.5 297.31 L579.0 297.36 L579.5 297.43 L580.0 297.51 L580.5 297.46 L581.0 297.58 L581.5 297.60 L582.0 297.46 L582.5 297.26 L583.0 297.79 L583.5 297.61 L584.0 297.25 L584.5 297.47 L585.0 297.65 L585.5 297.80 L586.0 297.24 L586.5 297.21 L587.0 297.49 L587.5 297.45 L588.0 297.74 L588.5 297.70 L589.0 297.40 L589.5 297.45 L590.0 297.55 L590.5 297.73 L591.0 297.32 L591.5 297.44 L592.0 297.25 L592.5 297.58 L593.0 297.22 L593.5 297.76 L594.0 297.51 L594.5 297.54 L595.0 297.25 L595.5 297.34 L596.0 297.48 L596.5 297.71 L597.0 297.52 L597.5 297.37 L598.0 297.79 L598.5 297.60 L599.0 297.52 L599.5 297.32 L600.0 297.38 L600.5 297.74 L601.0 297.28 L601.5 297.52 L602.0 297.57 L602.5 297.41 L603.0 297.66 L603.5 297.75 L604.0 297.71 L604.5 297.64 L605.0 297.32 L605.5 297.24 L606.0 297.46 L606.5 297.39 L607.0 297.32 L607.5 297.72 L608.0 297.33 L608.5 297.69 L609.0 297.76 L609.5 297.27 L610.0 297.75 L610.5 297.44 L611.0 297.33 L611.5 297.31 L612.0 297.22 L612.5 297.50" fill="none" stroke="#c235c6" stroke-width="2.4"/>
<path d="M37.0 297.5 L37.5 299.5 L38.0 297.5" fill="none" stroke="#c540c8" stroke-width="0.8" opacity=".85"/><circle cx="37.5" cy="299.5" r="0.9" fill="#c540c8" opacity=".9"/><path d="M80.5 297.5 L81.0 299.0 L81.5 297.5" fill="none" stroke="#c540c8" stroke-width="0.8" opacity=".85"/><circle cx="81.0" cy="299.0" r="0.9" fill="#c540c8" opacity=".9"/><path d="M124.0 297.5 L124.5 301.0 L125.0 297.5" fill="none" stroke="#c540c8" stroke-width="0.8" opacity=".85"/><circle cx="124.5" cy="301.0" r="0.9" fill="#c540c8" opacity=".9"/><path d="M129.5 297.5 L130.0 299.5 L130.5 297.5" fill="none" stroke="#c540c8" stroke-width="0.8" opacity=".85"/><circle cx="130.0" cy="299.5" r="0.9" fill="#c540c8" opacity=".9"/><path d="M144.5 297.5 L145.0 299.5 L145.5 297.5" fill="none" stroke="#c540c8" stroke-width="0.8" opacity=".85"/><circle cx="145.0" cy="299.5" r="0.9" fill="#c540c8" opacity=".9"/><path d="M148.5 297.5 L149.0 299.5 L149.5 297.5" fill="none" stroke="#c540c8" stroke-width="0.8" opacity=".85"/><circle cx="149.0" cy="299.5" r="0.9" fill="#c540c8" opacity=".9"/><path d="M154.5 297.5 L155.0 303.0 L155.5 297.5" fill="none" stroke="#c540c8" stroke-width="0.8" opacity=".85"/><circle cx="155.0" cy="303.0" r="0.9" fill="#c540c8" opacity=".9"/><path d="M169.5 297.5 L170.0 299.5 L170.5 297.5" fill="none" stroke="#c540c8" stroke-width="0.8" opacity=".85"/><circle cx="170.0" cy="299.5" r="0.9" fill="#c540c8" opacity=".9"/><path d="M197.0 297.5 L197.5 299.5 L198.0 297.5" fill="none" stroke="#c540c8" stroke-width="0.8" opacity=".85"/><circle cx="197.5" cy="299.5" r="0.9" fill="#c540c8" opacity=".9"/><path d="M220.5 297.5 L221.0 299.5 L221.5 297.5" fill="none" stroke="#c540c8" stroke-width="0.8" opacity=".85"/><circle cx="221.0" cy="299.5" r="0.9" fill="#c540c8" opacity=".9"/><path d="M229.0 297.5 L229.5 302.0 L230.0 297.5" fill="none" stroke="#c540c8" stroke-width="0.8" opacity=".85"/><circle cx="229.5" cy="302.0" r="0.9" fill="#c540c8" opacity=".9"/><path d="M242.0 297.5 L242.5 299.5 L243.0 297.5" fill="none" stroke="#c540c8" stroke-width="0.8" opacity=".85"/><circle cx="242.5" cy="299.5" r="0.9" fill="#c540c8" opacity=".9"/><path d="M283.2 297.5 L283.8 299.5 L284.2 297.5" fill="none" stroke="#c540c8" stroke-width="0.8" opacity=".85"/><circle cx="283.8" cy="299.5" r="0.9" fill="#c540c8" opacity=".9"/><path d="M304.5 297.5 L305.0 301.0 L305.5 297.5" fill="none" stroke="#c540c8" stroke-width="0.8" opacity=".85"/><circle cx="305.0" cy="301.0" r="0.9" fill="#c540c8" opacity=".9"/><path d="M309.5 297.5 L310.0 299.5 L310.5 297.5" fill="none" stroke="#c540c8" stroke-width="0.8" opacity=".85"/><circle cx="310.0" cy="299.5" r="0.9" fill="#c540c8" opacity=".9"/><path d="M337.0 297.5 L337.5 299.5 L338.0 297.5" fill="none" stroke="#c540c8" stroke-width="0.8" opacity=".85"/><circle cx="337.5" cy="299.5" r="0.9" fill="#c540c8" opacity=".9"/><path d="M359.5 297.5 L360.0 299.5 L360.5 297.5" fill="none" stroke="#c540c8" stroke-width="0.8" opacity=".85"/><circle cx="360.0" cy="299.5" r="0.9" fill="#c540c8" opacity=".9"/><path d="M384.5 297.5 L385.0 300.0 L385.5 297.5" fill="none" stroke="#c540c8" stroke-width="0.8" opacity=".85"/><circle cx="385.0" cy="300.0" r="0.9" fill="#c540c8" opacity=".9"/><path d="M406.5 297.5 L407.0 313.0 L407.5 297.5" fill="none" stroke="#c540c8" stroke-width="0.8" opacity=".85"/><circle cx="407.0" cy="313.0" r="0.9" fill="#c540c8" opacity=".9"/><path d="M412.0 297.5 L412.5 303.0 L413.0 297.5" fill="none" stroke="#c540c8" stroke-width="0.8" opacity=".85"/><circle cx="412.5" cy="303.0" r="0.9" fill="#c540c8" opacity=".9"/><path d="M422.0 297.5 L422.5 301.0 L423.0 297.5" fill="none" stroke="#c540c8" stroke-width="0.8" opacity=".85"/><circle cx="422.5" cy="301.0" r="0.9" fill="#c540c8" opacity=".9"/><path d="M428.2 297.5 L428.8 300.5 L429.2 297.5" fill="none" stroke="#c540c8" stroke-width="0.8" opacity=".85"/><circle cx="428.8" cy="300.5" r="0.9" fill="#c540c8" opacity=".9"/><path d="M443.2 297.5 L443.8 306.0 L444.2 297.5" fill="none" stroke="#c540c8" stroke-width="0.8" opacity=".85"/><circle cx="443.8" cy="306.0" r="0.9" fill="#c540c8" opacity=".9"/><path d="M462.0 297.5 L462.5 306.0 L463.0 297.5" fill="none" stroke="#c540c8" stroke-width="0.8" opacity=".85"/><circle cx="462.5" cy="306.0" r="0.9" fill="#c540c8" opacity=".9"/><path d="M469.5 297.5 L470.0 299.5 L470.5 297.5" fill="none" stroke="#c540c8" stroke-width="0.8" opacity=".85"/><circle cx="470.0" cy="299.5" r="0.9" fill="#c540c8" opacity=".9"/><path d="M477.0 297.5 L477.5 299.5 L478.0 297.5" fill="none" stroke="#c540c8" stroke-width="0.8" opacity=".85"/><circle cx="477.5" cy="299.5" r="0.9" fill="#c540c8" opacity=".9"/><path d="M489.5 297.5 L490.0 299.5 L490.5 297.5" fill="none" stroke="#c540c8" stroke-width="0.8" opacity=".85"/><circle cx="490.0" cy="299.5" r="0.9" fill="#c540c8" opacity=".9"/><path d="M503.2 297.5 L503.8 302.0 L504.2 297.5" fill="none" stroke="#c540c8" stroke-width="0.8" opacity=".85"/><circle cx="503.8" cy="302.0" r="0.9" fill="#c540c8" opacity=".9"/><path d="M523.2 297.5 L523.8 300.0 L524.2 297.5" fill="none" stroke="#c540c8" stroke-width="0.8" opacity=".85"/><circle cx="523.8" cy="300.0" r="0.9" fill="#c540c8" opacity=".9"/><path d="M529.5 297.5 L530.0 299.5 L530.5 297.5" fill="none" stroke="#c540c8" stroke-width="0.8" opacity=".85"/><circle cx="530.0" cy="299.5" r="0.9" fill="#c540c8" opacity=".9"/><path d="M552.0 297.5 L552.5 300.5 L553.0 297.5" fill="none" stroke="#c540c8" stroke-width="0.8" opacity=".85"/><circle cx="552.5" cy="300.5" r="0.9" fill="#c540c8" opacity=".9"/><path d="M564.5 297.5 L565.0 299.5 L565.5 297.5" fill="none" stroke="#c540c8" stroke-width="0.8" opacity=".85"/><circle cx="565.0" cy="299.5" r="0.9" fill="#c540c8" opacity=".9"/><path d="M574.5 297.5 L575.0 299.5 L575.5 297.5" fill="none" stroke="#c540c8" stroke-width="0.8" opacity=".85"/><circle cx="575.0" cy="299.5" r="0.9" fill="#c540c8" opacity=".9"/><path d="M584.5 297.5 L585.0 299.5 L585.5 297.5" fill="none" stroke="#c540c8" stroke-width="0.8" opacity=".85"/><circle cx="585.0" cy="299.5" r="0.9" fill="#c540c8" opacity=".9"/><path d="M589.5 297.5 L590.0 300.0 L590.5 297.5" fill="none" stroke="#c540c8" stroke-width="0.8" opacity=".85"/><circle cx="590.0" cy="300.0" r="0.9" fill="#c540c8" opacity=".9"/><path d="M599.5 297.5 L600.0 320.0 L600.5 297.5" fill="none" stroke="#c540c8" stroke-width="0.8" opacity=".85"/><circle cx="600.0" cy="320.0" r="0.9" fill="#c540c8" opacity=".9"/><circle cx="292.4" cy="299.5" r="0.7" fill="#c540c8" opacity=".8"/><circle cx="566.0" cy="299.4" r="0.7" fill="#c540c8" opacity=".8"/><circle cx="324.5" cy="299.5" r="0.7" fill="#c540c8" opacity=".8"/><circle cx="137.1" cy="299.4" r="0.7" fill="#c540c8" opacity=".8"/><circle cx="395.3" cy="299.8" r="0.7" fill="#c540c8" opacity=".8"/><circle cx="84.6" cy="299.1" r="0.7" fill="#c540c8" opacity=".8"/><circle cx="82.6" cy="299.8" r="0.7" fill="#c540c8" opacity=".8"/><circle cx="432.2" cy="298.8" r="0.7" fill="#c540c8" opacity=".8"/><circle cx="599.7" cy="300.1" r="0.7" fill="#c540c8" opacity=".8"/><circle cx="409.3" cy="299.6" r="0.7" fill="#c540c8" opacity=".8"/><circle cx="121.3" cy="298.7" r="0.7" fill="#c540c8" opacity=".8"/><circle cx="336.5" cy="298.8" r="0.7" fill="#c540c8" opacity=".8"/><circle cx="140.3" cy="299.0" r="0.7" fill="#c540c8" opacity=".8"/><circle cx="47.4" cy="299.3" r="0.7" fill="#c540c8" opacity=".8"/><circle cx="285.5" cy="299.9" r="0.7" fill="#c540c8" opacity=".8"/><circle cx="331.1" cy="299.6" r="0.7" fill="#c540c8" opacity=".8"/><circle cx="319.9" cy="299.6" r="0.7" fill="#c540c8" opacity=".8"/><circle cx="295.3" cy="299.1" r="0.7" fill="#c540c8" opacity=".8"/><circle cx="608.6" cy="300.1" r="0.7" fill="#c540c8" opacity=".8"/><circle cx="517.3" cy="299.7" r="0.7" fill="#c540c8" opacity=".8"/><circle cx="212.9" cy="299.0" r="0.7" fill="#c540c8" opacity=".8"/><circle cx="197.6" cy="298.8" r="0.7" fill="#c540c8" opacity=".8"/><circle cx="474.4" cy="299.3" r="0.7" fill="#c540c8" opacity=".8"/><circle cx="521.0" cy="299.2" r="0.7" fill="#c540c8" opacity=".8"/><circle cx="585.7" cy="299.9" r="0.7" fill="#c540c8" opacity=".8"/><circle cx="30.3" cy="299.0" r="0.7" fill="#c540c8" opacity=".8"/><circle cx="558.0" cy="299.4" r="0.7" fill="#c540c8" opacity=".8"/><circle cx="598.6" cy="299.3" r="0.7" fill="#c540c8" opacity=".8"/><circle cx="72.4" cy="299.6" r="0.7" fill="#c540c8" opacity=".8"/><circle cx="481.5" cy="299.1" r="0.7" fill="#c540c8" opacity=".8"/><circle cx="80.5" cy="299.2" r="0.7" fill="#c540c8" opacity=".8"/><circle cx="589.2" cy="299.8" r="0.7" fill="#c540c8" opacity=".8"/><circle cx="98.4" cy="299.0" r="0.7" fill="#c540c8" opacity=".8"/><circle cx="88.6" cy="298.8" r="0.7" fill="#c540c8" opacity=".8"/><circle cx="492.3" cy="298.9" r="0.7" fill="#c540c8" opacity=".8"/><circle cx="354.4" cy="299.3" r="0.7" fill="#c540c8" opacity=".8"/><circle cx="140.6" cy="299.7" r="0.7" fill="#c540c8" opacity=".8"/><circle cx="106.0" cy="299.6" r="0.7" fill="#c540c8" opacity=".8"/><circle cx="97.6" cy="299.3" r="0.7" fill="#c540c8" opacity=".8"/><circle cx="153.5" cy="299.1" r="0.7" fill="#c540c8" opacity=".8"/><circle cx="593.1" cy="299.8" r="0.7" fill="#c540c8" opacity=".8"/><circle cx="206.4" cy="299.9" r="0.7" fill="#c540c8" opacity=".8"/><circle cx="152.2" cy="299.3" r="0.7" fill="#c540c8" opacity=".8"/><circle cx="525.5" cy="299.6" r="0.7" fill="#c540c8" opacity=".8"/><circle cx="88.2" cy="300.1" r="0.7" fill="#c540c8" opacity=".8"/><circle cx="153.7" cy="299.1" r="0.7" fill="#c540c8" opacity=".8"/><circle cx="478.2" cy="299.2" r="0.7" fill="#c540c8" opacity=".8"/><circle cx="201.9" cy="298.8" r="0.7" fill="#c540c8" opacity=".8"/><circle cx="82.3" cy="299.5" r="0.7" fill="#c540c8" opacity=".8"/><circle cx="170.9" cy="299.5" r="0.7" fill="#c540c8" opacity=".8"/><circle cx="245.6" cy="299.3" r="0.7" fill="#c540c8" opacity=".8"/><circle cx="586.3" cy="299.4" r="0.7" fill="#c540c8" opacity=".8"/><circle cx="363.3" cy="299.9" r="0.7" fill="#c540c8" opacity=".8"/><circle cx="136.0" cy="298.9" r="0.7" fill="#c540c8" opacity=".8"/><circle cx="556.9" cy="299.8" r="0.7" fill="#c540c8" opacity=".8"/><circle cx="174.7" cy="299.0" r="0.7" fill="#c540c8" opacity=".8"/><circle cx="458.9" cy="300.0" r="0.7" fill="#c540c8" opacity=".8"/><circle cx="144.0" cy="300.0" r="0.7" fill="#c540c8" opacity=".8"/><circle cx="541.7" cy="299.5" r="0.7" fill="#c540c8" opacity=".8"/><circle cx="274.4" cy="298.8" r="0.7" fill="#c540c8" opacity=".8"/><circle cx="52.4" cy="300.0" r="0.7" fill="#c540c8" opacity=".8"/><circle cx="168.3" cy="299.7" r="0.7" fill="#c540c8" opacity=".8"/><circle cx="179.0" cy="299.9" r="0.7" fill="#c540c8" opacity=".8"/><circle cx="376.0" cy="299.1" r="0.7" fill="#c540c8" opacity=".8"/><circle cx="131.8" cy="299.7" r="0.7" fill="#c540c8" opacity=".8"/><circle cx="69.9" cy="299.0" r="0.7" fill="#c540c8" opacity=".8"/><circle cx="354.4" cy="299.9" r="0.7" fill="#c540c8" opacity=".8"/><circle cx="386.3" cy="299.1" r="0.7" fill="#c540c8" opacity=".8"/><circle cx="562.1" cy="299.0" r="0.7" fill="#c540c8" opacity=".8"/><circle cx="39.6" cy="299.1" r="0.7" fill="#c540c8" opacity=".8"/><circle cx="288.5" cy="298.8" r="0.7" fill="#c540c8" opacity=".8"/><circle cx="132.2" cy="299.2" r="0.7" fill="#c540c8" opacity=".8"/><circle cx="361.9" cy="298.9" r="0.7" fill="#c540c8" opacity=".8"/><circle cx="240.0" cy="299.9" r="0.7" fill="#c540c8" opacity=".8"/><circle cx="598.7" cy="299.6" r="0.7" fill="#c540c8" opacity=".8"/><circle cx="430.9" cy="299.5" r="0.7" fill="#c540c8" opacity=".8"/><circle cx="111.4" cy="298.7" r="0.7" fill="#c540c8" opacity=".8"/><circle cx="40.4" cy="300.0" r="0.7" fill="#c540c8" opacity=".8"/><circle cx="436.6" cy="300.0" r="0.7" fill="#c540c8" opacity=".8"/><circle cx="42.3" cy="299.6" r="0.7" fill="#c540c8" opacity=".8"/><circle cx="309.7" cy="299.7" r="0.7" fill="#c540c8" opacity=".8"/><circle cx="215.0" cy="300.1" r="0.7" fill="#c540c8" opacity=".8"/><circle cx="73.7" cy="299.5" r="0.7" fill="#c540c8" opacity=".8"/><circle cx="457.5" cy="300.0" r="0.7" fill="#c540c8" opacity=".8"/><circle cx="457.5" cy="299.7" r="0.7" fill="#c540c8" opacity=".8"/><circle cx="490.1" cy="300.0" r="0.7" fill="#c540c8" opacity=".8"/><circle cx="234.1" cy="299.7" r="0.7" fill="#c540c8" opacity=".8"/><circle cx="552.5" cy="299.9" r="0.7" fill="#c540c8" opacity=".8"/><circle cx="271.9" cy="299.8" r="0.7" fill="#c540c8" opacity=".8"/><circle cx="530.8" cy="299.5" r="0.7" fill="#c540c8" opacity=".8"/><circle cx="349.5" cy="296" r="0.9" fill="#c540c8"/>
<line x1="444.3" y1="334.7" x2="444.3" y2="382.3" stroke="#f7884a" stroke-width="0.9"/>
<circle cx="444.3" cy="334.7" r="0.9" fill="#f06a30"/>
<line x1="444.3" y1="374" x2="444.3" y2="382.3" stroke="#5a7ad8" stroke-width="0.9"/>
<text x="0" y="0" font-size="5.5" font-weight="bold" fill="#333" transform="translate(13 339.2) rotate(-90)" text-anchor="middle">FPS</text>
<text x="0" y="0" font-size="5" font-weight="bold" fill="#333" transform="translate(624 329) rotate(90)" text-anchor="middle">Jank</text>
</svg><!--/CHART-->
</body></html>
